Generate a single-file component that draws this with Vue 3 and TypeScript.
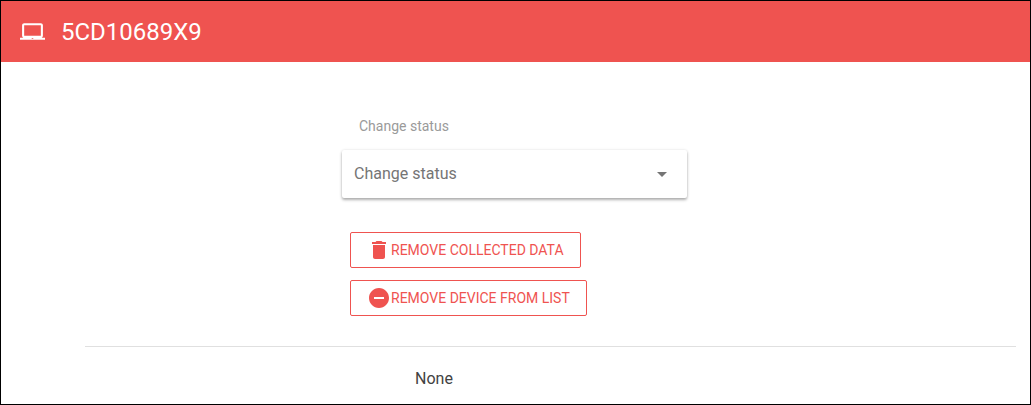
<script setup lang="ts">
const title: string = '5CD10689X9'
</script>

<template>
  <div class="frame">
    <header class="bar">
      <svg class="laptop" viewBox="0 0 24 24" width="25" height="25" fill="#fff">
        <path d="M20 18c1.1 0 1.99-.9 1.99-2L22 6c0-1.100-.9-2-2-2H4c-1.100 0-2 .9-2 2v10c0 1.100.9 2 2 2H0v2h24v-2h-4zM4 6h16v10H4V6zm8 13.200c-.4 0-1-.3-1-.7h2c0 .4-.6.7-1 .7z" />
      </svg>
      <h1 class="title">{{ title }}</h1>
    </header>
    <main class="body">
      <section class="form">
        <div class="label">Change status</div>
        <div class="select">
          <span class="value">Change status</span>
          <span class="caret"></span>
        </div>
        <button class="btn" type="button">
          <svg viewBox="0 0 24 24" width="24" height="24" fill="#ef5350">
            <path d="M6 19c0 1.1.9 2 2 2h8c1.1 0 2-.9 2-2V7H6v12zM19 4h-3.500l-1-1h-5l-1 1H5v2h14V4z" />
          </svg>
          REMOVE COLLECTED DATA
        </button>
        <button class="btn" type="button">
          <svg viewBox="0 0 24 24" width="24" height="24" fill="#ef5350">
            <path d="M12 2C6.480 2 2 6.480 2 12s4.480 10 10 10 10-4.480 10-10S17.520 2 12 2zm5 11H7v-2h10v2z" />
          </svg>
          REMOVE DEVICE FROM LIST
        </button>
      </section>
      <div class="divider"></div>
      <div class="none">None</div>
    </main>
  </div>
</template>

<style>
html, body { margin: 0; background: #fff; }
</style>

<style scoped>
.frame {
  box-sizing: border-box;
  width: 1031px;
  height: 405px;
  border: 1px solid #000;
  overflow: hidden;
  font-family: Roboto, sans-serif;
  background: #fff;
}
.bar {
  height: 61px;
  background: #ef5350;
  display: flex;
  align-items: center;
  padding-left: 19px;
  color: #fff;
}
.title {
  margin: 0 0 0 16px;
  font-size: 24px;
  font-weight: 400;
}
.body {
  display: flex;
  flex-direction: column;
}
.form {
  margin-left: 341px;
  display: flex;
  flex-direction: column;
  align-items: flex-start;
}
.label {
  margin: 56px 0 0 17px;
  font-size: 14px;
  line-height: 16px;
  color: #9a9a9a;
}
.select {
  box-sizing: border-box;
  width: 345px;
  height: 48px;
  margin-top: 16px;
  padding: 0 20px 0 12px;
  display: flex;
  align-items: center;
  justify-content: space-between;
  font-size: 16px;
  color: #757575;
  border-radius: 2px;
  background: #fff;
  box-shadow: 0 2px 3px rgba(0, 0, 0, 0.3), 0 0 3px rgba(0, 0, 0, 0.1);
}
.value {
  padding-bottom: 2px;
}
.caret {
  width: 0;
  height: 0;
  border-left: 5px solid transparent;
  border-right: 5px solid transparent;
  border-top: 5px solid #757575;
}
.btn {
  box-sizing: border-box;
  height: 36px;
  margin: 34px 0 0 8px;
  padding: 0 16px;
  display: flex;
  align-items: center;
  font-family: inherit;
  font-size: 14px;
  font-weight: 400;
  color: #ef5350;
  background: #fff;
  border: 1px solid #ef5350;
  border-radius: 2px;
}
.btn + .btn { margin-top: 12px; }
.divider {
  margin: 30px 14px 0 84px;
  height: 1px;
  background: #e0e0e0;
}
.none {
  margin: 22px 0 0 414px;
  font-size: 16px;
  line-height: 19px;
  color: #424242;
}
</style>
